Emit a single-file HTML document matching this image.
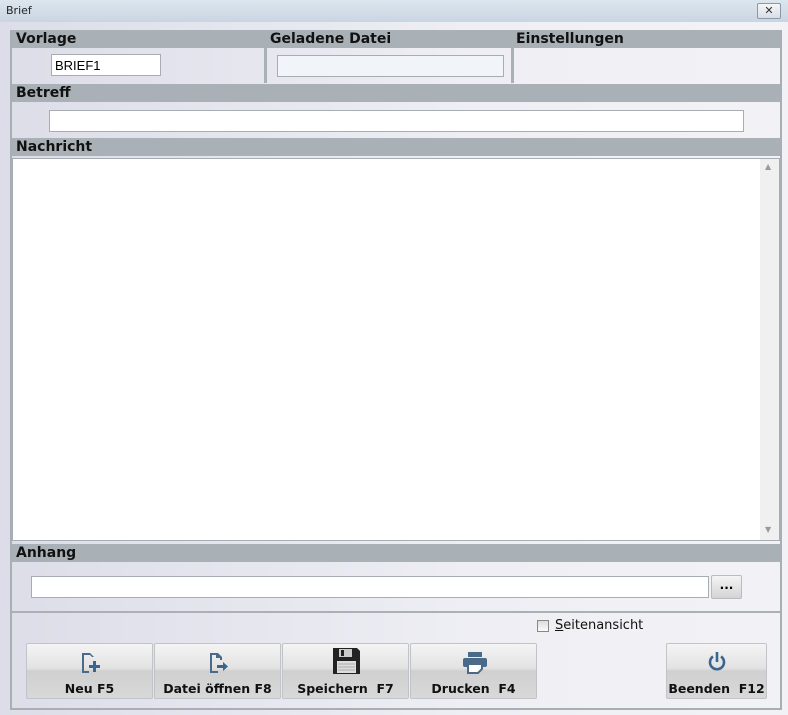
<!DOCTYPE html>
<html><head><style>
*{box-sizing:border-box;margin:0;padding:0}
body{width:788px;height:715px;overflow:hidden;background:linear-gradient(90deg,#dcdde8,#eeeef4 60%,#f2f2f6);font-family:"DejaVu Sans","Liberation Sans",sans-serif;position:relative}
.a{position:absolute}
.title{left:0;top:0;width:788px;height:22px;background:linear-gradient(#dde6ef,#c9d5e2);font-size:11px;color:#222;padding:4px 0 0 6px}
.x{left:757px;top:3px;width:24px;height:16px;border:1px solid #8a98a8;border-radius:2px;background:linear-gradient(#f4f6f8,#d8dee6);font-size:11px;text-align:center;line-height:13px;color:#333}
.frame{left:10px;top:30px;width:772px;height:680px;border:2px solid #a7aeb4;border-top:none}
.hd{background:#a9b0b6;height:18px;font-weight:bold;font-size:14px;color:#111;padding-left:4px;line-height:19px}
.inp{background:#fff;border:1px solid #a7adb3}
.btn{top:643px;height:56px;border:1px solid #c0c4c8;border-radius:2px;background:linear-gradient(#f4f4f4,#e2e2e2 45%,#d0d0d0 50%,#d8d8d8);font-weight:bold;font-size:12.5px;text-align:center;color:#111}
.btn span{position:absolute;left:0;right:0;top:37px;white-space:nowrap}
.btn svg{position:absolute;left:50%;top:6px;margin-left:-12px}
</style></head><body>
<div class="a title">Brief</div>
<div class="a x">✕</div>
<div class="a frame"></div>
<div class="a hd" style="left:12px;top:30px;width:768px">Vorlage</div>
<div class="a hd" style="left:266px;top:30px;width:246px;background:none">Geladene Datei</div>
<div class="a hd" style="left:512px;top:30px;width:200px;background:none">Einstellungen</div>
<div class="a" style="left:264px;top:48px;width:3px;height:35px;background:#a9b0b6"></div>
<div class="a" style="left:511px;top:48px;width:3px;height:35px;background:#a9b0b6"></div>
<div class="a inp" style="left:51px;top:54px;width:110px;height:22px;font-size:12px;padding:3px 3px;font-family:'Liberation Sans',sans-serif;font-size:13px">BRIEF1</div>
<div class="a inp" style="left:277px;top:55px;width:227px;height:22px;background:#f1f5fa"></div>
<div class="a hd" style="left:12px;top:84px;width:768px">Betreff</div>
<div class="a inp" style="left:49px;top:110px;width:695px;height:22px"></div>
<div class="a hd" style="left:12px;top:138px;width:768px">Nachricht</div>
<div class="a inp" style="left:12px;top:158px;width:768px;height:383px"></div>
<div class="a" style="left:760px;top:159px;width:19px;height:381px;background:#f0f0f0"></div>
<div class="a" style="left:765px;top:162px;font-size:8px;color:#999">▲</div>
<div class="a" style="left:765px;top:525px;font-size:8px;color:#999">▼</div>
<div class="a hd" style="left:12px;top:544px;width:768px">Anhang</div>
<div class="a inp" style="left:31px;top:576px;width:678px;height:22px"></div>
<div class="a" style="left:711px;top:575px;width:31px;height:24px;border:1px solid #b8bcc0;border-radius:2px;background:linear-gradient(#f4f4f4,#d4d4d4);font-weight:bold;font-size:12px;text-align:center;line-height:18px">...</div>
<div class="a" style="left:12px;top:611px;width:768px;height:2px;background:#a9b0b6"></div>
<div class="a" style="left:537px;top:620px;width:12px;height:12px;border:1px solid #888;background:linear-gradient(#ddd,#fafafa)"></div>
<div class="a" style="left:555px;top:618px;font-size:13px;color:#111"><u>S</u>eitenansicht</div>
<div class="a btn" style="left:26px;width:127px"><svg width="24" height="24" viewBox="0 0 24 24"><path d="M4 3h8v2H6v16h5v2H4z M12 3l4 4h-2l-2-2z" fill="#4a6a8a"/><path d="M15 11h3v4h4v3h-4v4h-3v-4h-4v-3h4z" fill="#3a6590"/></svg><span>Neu F5</span></div>
<div class="a btn" style="left:154px;width:127px"><svg width="24" height="24" viewBox="0 0 24 24"><path d="M4 3h8l4 4v3h-2V8h-4V5H6v16h6v2H4z" fill="#4a6a8a"/><path d="M11 15h6v-3l5 4.5-5 4.5v-3h-6z" fill="#3a6590"/></svg><span>Datei öffnen F8</span></div>
<div class="a btn" style="left:282px;width:127px"><svg width="30" height="30" viewBox="0 0 30 30" style="margin-left:-15px;top:2px"><path d="M2 2h24l3 3v23H2z" fill="#222"/><rect x="8" y="3" width="13" height="8" fill="#ccc"/><rect x="10" y="4" width="3" height="6" fill="#222"/><rect x="6" y="15" width="19" height="12" fill="#ddd"/><path d="M7 18h17M7 21h17M7 24h17" stroke="#aaa"/></svg><span>Speichern&nbsp; F7</span></div>
<div class="a btn" style="left:410px;width:127px"><svg width="26" height="24" viewBox="0 0 26 24"><rect x="6" y="2" width="14" height="5" fill="#4a6a8a"/><rect x="1" y="8" width="24" height="9" rx="2" fill="#4a6a8a"/><path d="M6 14h14v5l-4 4H6z" fill="#fff" stroke="#4a6a8a" stroke-width="2"/></svg><span>Drucken&nbsp; F4</span></div>
<div class="a btn" style="left:666px;width:101px"><svg width="24" height="24" viewBox="0 0 24 24"><path d="M8 6.5A7 7 0 1 0 16 6.5" fill="none" stroke="#3a6590" stroke-width="2.6"/><path d="M12 2v10" stroke="#3a6590" stroke-width="2.6"/></svg><span>Beenden&nbsp; F12</span></div>
</body></html>
